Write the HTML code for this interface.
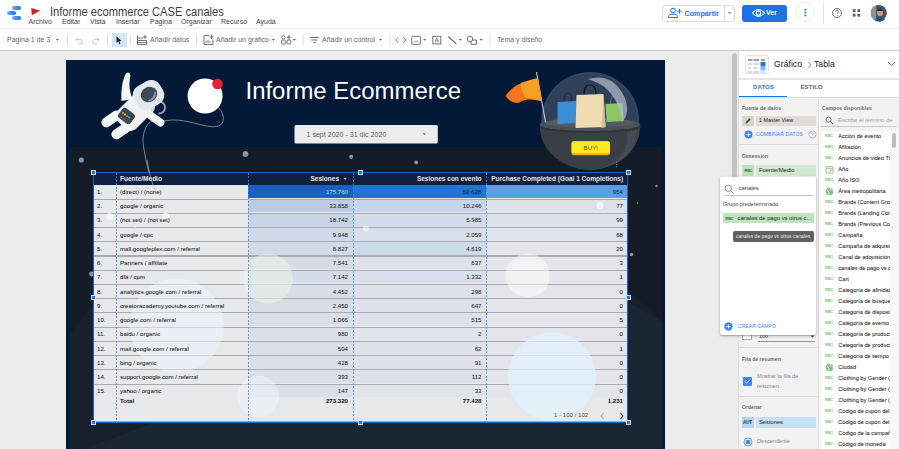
<!DOCTYPE html>
<html><head><meta charset="utf-8">
<style>
*{box-sizing:border-box;margin:0;padding:0}
html,body{width:899px;height:449px;overflow:hidden;background:#fff;font-family:"Liberation Sans",sans-serif;position:relative}
.a{position:absolute;white-space:nowrap}
#hdr{position:absolute;left:0;top:0;width:899px;height:28px;background:#fff}
#tb{position:absolute;left:0;top:28px;width:899px;height:22px;background:#fff;border-top:1px solid #f1f1f1}
#ws{position:absolute;left:0;top:50px;width:738px;height:399px;background:#ececec;border-top:1px solid #c8c8c8}
#cv{position:absolute;left:65.5px;top:60px;width:599.3px;height:389px;background:#021a38;overflow:hidden}
#panel{position:absolute;left:738px;top:50px;width:161px;height:399px;background:#fff;border-left:1px solid #dadce0;border-top:1px solid #c8c8c8}
.menu{font-size:7px;color:#3c4043;top:17.5px}
.tbt{font-size:7px;color:#5f6368;top:6.8px}
.div{position:absolute;width:1px;background:#e0e0e0}
#tbl{position:absolute;left:27.5px;top:112.5px;width:533.6px;height:250px;overflow:hidden}
.tr{position:absolute;z-index:0;left:0;width:533.6px;background:#e7e8ea;border-bottom:1.5px solid #a8aaad}
.hc{position:absolute;z-index:0}
.td{position:absolute;z-index:2;font-size:6.1px;color:#1a1a1a;-webkit-text-stroke:0.04px #1a1a1a;white-space:nowrap;line-height:7px}
.td.r{text-align:right}
.td.b{font-weight:700}
.th{position:absolute;z-index:2;top:2.5px;font-size:6.5px;font-weight:700;color:#e8eaed;white-space:nowrap;line-height:7px}
.dl{position:absolute;z-index:3;top:0;width:1px;height:250px;background:repeating-linear-gradient(180deg,#3d86f2 0 2px,transparent 2px 3.5px);opacity:0.8}
.hd{position:absolute;width:5px;height:5px;background:#1a73e8;border:1px solid #cfe0fb}
.sec{position:absolute;left:3px;font-size:5.1px;font-weight:700;color:#6a6d70;white-space:nowrap}
.fl{position:absolute;left:838.3px;margin-top:0.9px;font-size:5.6px;color:#1a1a1a;-webkit-text-stroke:0.05px #1a1a1a;white-space:nowrap;line-height:7px}
.abc{position:absolute;font-size:3.8px;font-weight:700;color:#7cc47c;white-space:nowrap;line-height:5px;letter-spacing:-0.1px}
</style></head><body>
<div id="hdr">
  <!-- logo -->
  <div class="a" style="left:12px;top:6.3px;width:9px;height:3.8px;border-radius:2px;background:linear-gradient(90deg,#7aaaf5,#1a6ef0)"></div>
  <div class="a" style="left:7px;top:11px;width:9px;height:4px;border-radius:2px;background:linear-gradient(90deg,#7aaaf5,#1a6ef0)"></div>
  <div class="a" style="left:12px;top:16px;width:9px;height:3.8px;border-radius:2px;background:linear-gradient(90deg,#7aaaf5,#1a6ef0)"></div>
  <svg class="a" style="left:30px;top:7px" width="12" height="10"><path d="M1.2 1 L10.2 3.8 L1.8 8.2 Z" fill="#d01f1f"/></svg>
  <div class="a" style="left:49.5px;top:5.2px;font-size:12.3px;color:#3c4043;transform:scaleX(0.905);transform-origin:0 0">Informe ecommerce CASE canales</div>
  <div class="a menu" style="left:28.5px">Archivo</div>
  <div class="a menu" style="left:62px">Editar</div>
  <div class="a menu" style="left:90px">Vista</div>
  <div class="a menu" style="left:116px">Insertar</div>
  <div class="a menu" style="left:150px">Página</div>
  <div class="a menu" style="left:181px">Organizar</div>
  <div class="a menu" style="left:221px">Recurso</div>
  <div class="a menu" style="left:256px">Ayuda</div>
  <!-- share -->
  <div class="a" style="left:662px;top:4.5px;width:72.5px;height:17.5px;border:1px solid #dadce0;border-radius:3px"></div>
  <div class="a" style="left:724px;top:5px;width:1px;height:16.5px;background:#dadce0"></div>
  <div class="a" style="left:684.5px;top:8.8px;font-size:7.2px;font-weight:700;color:#1a73e8">Compartir</div>
  <div class="a" style="left:742px;top:4.5px;width:45px;height:17.3px;background:#1a73e8;border-radius:3px"></div>
  <div class="a" style="left:766px;top:8.8px;font-size:7px;font-weight:700;color:#fff">Ver</div>
  <div class="a" style="left:795px;top:2px;width:20px;height:20px;border:1px solid #e8eaed;border-radius:50%"></div>
  <div class="a" style="left:823px;top:2px;width:1px;height:22px;background:#e0e0e0"></div>
  
</div>
<div id="tb">
  <div class="a tbt" style="left:7px">Página 1 de 3</div>
  <div class="a" style="left:111.6px;top:4px;width:15px;height:14px;background:#d2e3fc"></div>
  <div class="a tbt" style="left:150px">Añadir datos</div>
  <div class="a tbt" style="left:216px">Añadir un gráfico</div>
  <div class="a tbt" style="left:322px">Añadir un control</div>
  <div class="a tbt" style="left:497px">Tema y diseño</div>
</div>
<svg class="a" style="left:0;top:0;z-index:5" width="899" height="50" viewBox="0 0 899 50">
  <g fill="none" stroke="#5f6368" stroke-width="0.9">
    <!-- undo / redo -->
    <path d="M78 37.5 L76 39.5 L78 41.5 M76 39.5 H80.5 A2.3 2.3 0 0 1 80.5 44 H78" stroke="#bdc1c6"/>
    <path d="M97 37.5 L99 39.5 L97 41.5 M99 39.5 H94.5 A2.3 2.3 0 0 0 94.5 44 H97" stroke="#bdc1c6"/>
    <!-- add data -->
    <path d="M137.5 35.5 V44.5 H146.5 V40 M137.5 38 H143 M137.5 40.5 H146.5 M137.5 42.5 H146.5"/>
    <path d="M145 35 V39 M143 37 H147" stroke-width="0.9"/>
    <!-- add chart -->
    <path d="M209 35.5 H204 V44.5 H213 V39.5"/>
    <path d="M206 43 V41 M208 43 V39.5 M210 43 V41.5" />
    <path d="M211.5 35 V39 M209.5 37 H213.5"/>
    <!-- community -->
    <rect x="281.5" y="40" width="3.8" height="4" rx="1"/>
    <rect x="287" y="40" width="3.8" height="4" rx="1"/>
    <path d="M283.4 35.3 L285.4 37.3 L283.4 39.3 L281.4 37.3 Z"/>
    <path d="M289 35 V39.5 M286.8 37.2 H291.2"/>
    <!-- filter -->
    <path d="M310 37.5 H319 M311.5 40 H317.5 M313.3 42.5 H315.7"/>
    <!-- code -->
    <path d="M398 37.5 L395.8 40 L398 42.5 M403.5 37.5 L405.7 40 L403.5 42.5"/>
    <!-- image -->
    <rect x="411.8" y="36.3" width="8.8" height="8" rx="0.8"/>
    <path d="M414 42.3 L415.3 41 L416.3 42 L417.5 40.8 L418.5 42.3" stroke-width="0.7"/>
    <!-- text box -->
    <rect x="432.8" y="36.3" width="8" height="7.6"/>
    <path d="M434.8 42.5 L436.8 37.8 L438.8 42.5 M435.5 41 H438" stroke-width="0.7"/>
    <!-- line -->
    <path d="M448.3 36.5 L456.3 43.8" stroke-width="1.1"/>
    <!-- shapes -->
    <circle cx="470" cy="39" r="2.8"/>
    <path d="M472.5 40 H476.5 V44.3 H471 V41.8"/>
  </g>
  <g fill="#5f6368">
    <path d="M55.8 39 h3.2 l-1.6 1.8z"/>
    <path d="M271.8 39 h3.2 l-1.6 1.8z"/>
    <path d="M292.8 39 h3.2 l-1.6 1.8z"/>
    <path d="M379 39 h3.2 l-1.6 1.8z"/>
    <path d="M423 39 h3.2 l-1.6 1.8z"/>
    <path d="M458.8 39 h3.2 l-1.6 1.8z"/>
    <path d="M479.5 39 h3.2 l-1.6 1.8z"/>
  </g>
  <!-- select pointer -->
  <path d="M116.5 36.3 L116.5 43 L118.2 41.6 L119.5 44.2 L120.5 43.7 L119.3 41.2 L121.5 41 Z" fill="#202124"/>
  <!-- dividers -->
  <g stroke="#e0e0e0" stroke-width="1">
    <path d="M67.5 34 V46 M107.5 34 V46 M130.5 34 V46 M196.5 34 V46 M303 34 V46 M390 34 V46 M490 34 V46"/>
  </g>
  <!-- share icons -->
  <g fill="none" stroke="#1a73e8" stroke-width="1">
    <circle cx="673" cy="10.5" r="2.3"/>
    <path d="M668.5 17.5 V16.5 Q668.5 14.2 673 14.2 Q677.5 14.2 677.5 16.5 V17.5 Z"/>
    <path d="M679.5 9 V13.5 M677.3 11.2 H681.7"/>
  </g>
  <path d="M728 12.2 h3 l-1.5 1.7z" fill="#1a73e8"/>
  <g fill="none" stroke="#fff" stroke-width="1">
    <path d="M752.5 13 Q758.5 6 764.5 13 Q758.5 20 752.5 13 Z" stroke-width="1.1"/>
    <circle cx="758.5" cy="13" r="2.1" stroke-width="1.1"/>
  </g>
  <g fill="#1a73e8">
    <circle cx="805.4" cy="9.8" r="1"/><circle cx="805.4" cy="12.6" r="1"/><circle cx="805.4" cy="15.4" r="1"/>
  </g>
  <circle cx="837" cy="13" r="4.5" fill="none" stroke="#5f6368" stroke-width="0.9"/>
  <path d="M835.5 11.8 Q835.5 10 837 10 Q838.6 10 838.6 11.6 Q838.6 12.6 837.3 13.3 V14.2" fill="none" stroke="#5f6368" stroke-width="0.8"/>
  <circle cx="837.2" cy="15.6" r="0.5" fill="#5f6368"/>
  <g fill="#5f6368">
    <rect x="852.8" y="9.2" width="2.8" height="2.8"/><rect x="857.4" y="9.2" width="2.8" height="2.8"/>
    <rect x="852.8" y="13.8" width="2.8" height="2.8"/><rect x="857.4" y="13.8" width="2.8" height="2.8"/>
  </g>
  <!-- avatar -->
  <circle cx="878.8" cy="13" r="8" fill="#4a5461"/>
  <path d="M871 13 A8 8 0 0 1 876 5.5 L876 21 A8 8 0 0 1 871 13Z" fill="#8b949c"/>
  <ellipse cx="880" cy="12.5" rx="3" ry="3.6" fill="#c99a7a"/>
  <path d="M876.5 11 Q880 6 883.5 11" fill="#2a2a2a"/>
  <path d="M874.5 20 Q880 15 885 19.5 A8 8 0 0 1 874.5 20Z" fill="#2f4e73"/>
</svg>

<div id="ws"></div>
<div id="cv">
  <div class="a" style="left:4.5px;top:87px;width:592.2px;height:302px;background:#141c28"></div>
  <svg class="a" style="left:0;top:0" width="599.3" height="389" viewBox="65.5 60 599.3 389">
    <!-- diagonal subtle band bottom -->
    <path d="M69.5 333.5 L203 172.5 L500 172.5 L661.7 321.5 L661.7 449 L69.5 449 Z" fill="#17202b"/>
    <path d="M83.5 449 L220 397.5 L450 200 L661.7 321.5 L661.7 449 Z" fill="#1b2634"/>
    <!-- dots -->
    <circle cx="80.8" cy="160" r="2.6" fill="#8a929c"/>
    <circle cx="245" cy="154" r="2.9" fill="#8a929c"/>
    <circle cx="350.7" cy="156.8" r="2.1" fill="#8a929c"/>
    <circle cx="415.7" cy="162.3" r="1.9" fill="#8a929c"/>
    <circle cx="91" cy="274" r="2.4" fill="#8a929c"/>
    <circle cx="631" cy="254.5" r="1.8" fill="#8a929c"/>
    <circle cx="656" cy="186" r="1.2" fill="#8a929c"/>
    <circle cx="637" cy="203" r="0.8" fill="#8a929c"/>
    
    <!-- astronaut tether -->
    <path d="M160 121 C150 118 145 125 143 135 C141 145 146 160 152 190" stroke="#a9b0b8" stroke-width="0.7" fill="none"/>
    <path d="M163 121 C185 116 205 130 218 126 C227 122 222 110 216 106" stroke="#a9b0b8" stroke-width="0.7" fill="none"/>
    <!-- moon -->
    <circle cx="204.6" cy="96" r="17.5" fill="#fff"/>
    <circle cx="217" cy="84" r="5.3" fill="#e8202f"/>
    <!-- astronaut -->
    <g>
      <path d="M159 101.5 A6 6 0 1 1 158 113.5" stroke="#a3abb5" stroke-width="1.8" fill="none"/>
      <rect x="-13" y="-18" width="26" height="36" rx="6" fill="#d4d9df" transform="translate(135 111) rotate(45)"/>
      <rect x="-12" y="-16" width="24" height="33" rx="6" fill="#f0f2f4" transform="translate(133 113) rotate(45)"/>
      <path d="M121 101 Q120 86 124.5 75 Q126.5 71.5 129 73 Q130.5 74.5 129.5 78 Q127.5 88 132 99 Z" fill="#f4f5f6"/>
      <rect x="-5" y="-12" width="10" height="22" rx="5" fill="#f4f5f6" transform="translate(110 119.5) rotate(56)"/>
      <rect x="-5" y="-12" width="10" height="22" rx="5" fill="#f4f5f6" transform="translate(120 131.5) rotate(56)"/>
      <rect x="-4" y="-10" width="8" height="20" rx="4" fill="#f4f5f6" transform="translate(155 119) rotate(-55)"/>
      <rect x="-15" y="-13" width="30" height="26" rx="10" fill="#e4e7eb" transform="translate(148 95) rotate(-30)"/>
      <ellipse cx="148.5" cy="94.5" rx="8.5" ry="7.5" fill="#3d4a59" transform="rotate(-30 148.5 94.5)"/>
      <path d="M154.5 92 Q155 99 148 101" stroke="#8aa4b8" stroke-width="1.8" fill="none"/>
      <rect x="-7.5" y="-6" width="15" height="12" rx="3" fill="#3c4552" transform="translate(126 116) rotate(38)"/>
      <circle cx="122.5" cy="113" r="1" fill="#f59a23"/>
      <circle cx="124.5" cy="114.5" r="1" fill="#f5d423"/>
      <circle cx="126.5" cy="116" r="1" fill="#34c759"/>
      <circle cx="128.5" cy="117.5" r="1" fill="#30d0b0"/>
      <path d="M120.5 117 L126 121" stroke="#d23a3a" stroke-width="1"/>
    </g>
    <!-- title -->
    <text x="245" y="99.1" font-family="Liberation Sans" font-size="24.5" fill="#fff" textLength="215.5" lengthAdjust="spacingAndGlyphs">Informe Ecommerce</text>
    <!-- date picker -->
    <rect x="294" y="125.1" width="143.3" height="18.3" rx="1.5" fill="#ececec"/>
    <text x="306" y="137.1" font-family="Liberation Sans" font-size="7.1" fill="#616161">1 sept 2020 - 31 dic 2020</text>
    <path d="M422 133.2 h3.4 l-1.7 1.9 z" fill="#5f6368"/>
    <!-- globe -->
    <circle cx="589.7" cy="121" r="49" fill="#33465e"/>
    <circle cx="589.7" cy="121" r="46.5" fill="#2e4159"/>
    <path d="M539.2 125 C539.2 152 563 169.5 589.5 169.5 C616 169.5 639.8 152 639.8 125 Z" fill="#3a3f46"/>
    <path d="M626 132 C630 150 615 166 595 169 C622 166 636 150 637 130 Z" fill="#454b53"/>
    <ellipse cx="589.5" cy="126.5" rx="50.3" ry="6.5" fill="#30343a"/>
    <ellipse cx="589.5" cy="124.5" rx="50.3" ry="6.5" fill="#4b5058"/>
    <ellipse cx="589.5" cy="122.8" rx="45" ry="4.6" fill="#555a62"/>
    <path d="M616 161.5 v0.8 M616 164 v0.8 M616 166.5 v0.8" stroke="#8a929c" stroke-width="0.9"/>
    <!-- bags -->
    <path d="M563.5 102 Q563.5 93 567.5 93 Q571.5 93 571.5 102" stroke="#222" stroke-width="0.9" fill="none"/>
    <path d="M557 102 L576 101 L575 123 L557 124 Z" fill="#3a8fd6"/>
    <path d="M610 104 Q610 96.5 613.5 96.5 Q617 96.5 617 104" stroke="#777e80" stroke-width="0.8" fill="none"/>
    <path d="M605 104 L622 103 L623 121 L606 122 Z" fill="#8cc763"/>
    <path d="M583.5 95.5 Q583 85 589.5 85 Q596 85 595.5 95.5" stroke="#111" stroke-width="1.1" fill="none"/>
    <path d="M576 95 L603 94 L605 127 L575 128 Z" fill="#efdcb0"/>
    <path d="M603 94 L605 127 L601 128 Z" fill="#d4c298"/>
    <!-- highlight -->
    <path d="M587.5 79 Q612 72 624 97 Q630 112 622 122 Q619 100 604 87 Q597 82 587.5 79 Z" fill="#b4bcc7" opacity="0.72"/>
    <!-- BUY button -->
    <rect x="571" y="141.3" width="38.5" height="14" rx="2.5" fill="#f29f05"/>
    <rect x="571" y="141.3" width="38.5" height="12.3" rx="2.5" fill="#ffea1f"/>
    <text x="590.3" y="150.3" text-anchor="middle" font-family="Liberation Sans" font-size="6.2" fill="#5c5410">BUY!</text>
    <!-- flag -->
    <path d="M536 72 L545 122" stroke="#d8dde2" stroke-width="1"/>
    <path d="M505 96 Q515 82 528 82 L537.5 78 L541 101 Q525 97 518 103 Q510 103 505 96 Z" fill="#f4761a"/>
    <path d="M520 83 Q528 80 537.5 78 L541 101 Q530 98 526 98 Q520 92 520 83 Z" fill="#f7a024"/>
    </svg>
  <!-- table -->
  <div id="tbl">
    <div class="a" style="left:0;top:12px;width:533.6px;height:238px;background:#a9abae"></div>
    <div class="a" style="left:0;top:0;width:533.6px;height:12.8px;background:#0f2140"></div>
    <div class="th" style="left:27px">Fuente/Medio</div>
    <div class="th" style="right:287.6px">Sesiones</div>
    <svg class="a" style="left:249.5px;top:4px" width="5" height="4"><path d="M0.5 1 h3.2 l-1.6 1.8z" fill="#fff"/></svg>
    <div class="th" style="right:145px">Sesiones con evento</div>
    <div class="th" style="right:3.5px">Purchase Completed (Goal 1 Completions)</div>
<div class="tr" style="top:12.80px;height:14.24px"></div>
<div class="hc" style="left:155px;top:12.80px;width:104.5px;height:12.74px;background:#1b5fbf"></div>
<div class="hc" style="left:259.5px;top:12.80px;width:133.5px;height:12.74px;background:#1f74d8"></div>
<div class="hc" style="left:393px;top:12.80px;width:140.60000000000002px;height:12.74px;background:#5a9fe6"></div>
<div class="td" style="left:4px;top:15.50px">1.</div>
<div class="td" style="left:27px;top:15.50px">(direct) / (none)</div>
<div class="td r" style="right:278.6px;top:15.50px;color:#cfe0f7">175.760</div>
<div class="td r" style="right:145.10000000000002px;top:15.50px">50.628</div>
<div class="td r" style="right:3.6000000000000227px;top:15.50px">954</div>
<div class="tr" style="top:27.04px;height:14.24px"></div>
<div class="hc" style="left:155px;top:27.04px;width:104.5px;height:12.74px;background:#bccde3"></div>
<div class="hc" style="left:259.5px;top:27.04px;width:133.5px;height:12.74px;background:#c4d5eb"></div>
<div class="hc" style="left:393px;top:27.04px;width:140.60000000000002px;height:12.74px;background:#dde2ea"></div>
<div class="td" style="left:4px;top:29.74px">2.</div>
<div class="td" style="left:27px;top:29.74px">google / organic</div>
<div class="td r" style="right:278.6px;top:29.74px;color:#222">33.858</div>
<div class="td r" style="right:145.10000000000002px;top:29.74px">10.246</div>
<div class="td r" style="right:3.6000000000000227px;top:29.74px">77</div>
<div class="tr" style="top:41.28px;height:14.24px"></div>
<div class="hc" style="left:155px;top:41.28px;width:104.5px;height:12.74px;background:#c8d4e5"></div>
<div class="hc" style="left:259.5px;top:41.28px;width:133.5px;height:12.74px;background:#d3dcea"></div>
<div class="hc" style="left:393px;top:41.28px;width:140.60000000000002px;height:12.74px;background:#dbe1ea"></div>
<div class="td" style="left:4px;top:43.98px">3.</div>
<div class="td" style="left:27px;top:43.98px">(not set) / (not set)</div>
<div class="td r" style="right:278.6px;top:43.98px;color:#222">18.742</div>
<div class="td r" style="right:145.10000000000002px;top:43.98px">5.985</div>
<div class="td r" style="right:3.6000000000000227px;top:43.98px">99</div>
<div class="tr" style="top:55.52px;height:14.24px"></div>
<div class="hc" style="left:155px;top:55.52px;width:104.5px;height:12.74px;background:#d0d9e7"></div>
<div class="hc" style="left:259.5px;top:55.52px;width:133.5px;height:12.74px;background:#d9dfea"></div>
<div class="hc" style="left:393px;top:55.52px;width:140.60000000000002px;height:12.74px;background:#dfe3ea"></div>
<div class="td" style="left:4px;top:58.22px">4.</div>
<div class="td" style="left:27px;top:58.22px">google / cpc</div>
<div class="td r" style="right:278.6px;top:58.22px;color:#222">9.948</div>
<div class="td r" style="right:145.10000000000002px;top:58.22px">2.059</div>
<div class="td r" style="right:3.6000000000000227px;top:58.22px">68</div>
<div class="tr" style="top:69.76px;height:14.24px"></div>
<div class="hc" style="left:155px;top:69.76px;width:104.5px;height:12.74px;background:#d1dae7"></div>
<div class="hc" style="left:259.5px;top:69.76px;width:133.5px;height:12.74px;background:#cddaea"></div>
<div class="hc" style="left:393px;top:69.76px;width:140.60000000000002px;height:12.74px;background:#e3e5ea"></div>
<div class="td" style="left:4px;top:72.46px">5.</div>
<div class="td" style="left:27px;top:72.46px">mall.googleplex.com / referral</div>
<div class="td r" style="right:278.6px;top:72.46px;color:#222">8.827</div>
<div class="td r" style="right:145.10000000000002px;top:72.46px">4.619</div>
<div class="td r" style="right:3.6000000000000227px;top:72.46px">20</div>
<div class="tr" style="top:84.00px;height:14.24px"></div>
<div class="hc" style="left:155px;top:84.00px;width:104.5px;height:12.74px;background:#d5dce8"></div>
<div class="hc" style="left:259.5px;top:84.00px;width:133.5px;height:12.74px;background:#dce1ea"></div>
<div class="hc" style="left:393px;top:84.00px;width:140.60000000000002px;height:12.74px;background:#e4e5ea"></div>
<div class="td" style="left:4px;top:86.70px">6.</div>
<div class="td" style="left:27px;top:86.70px">Partners / affiliate</div>
<div class="td r" style="right:278.6px;top:86.70px;color:#222">7.541</div>
<div class="td r" style="right:145.10000000000002px;top:86.70px">637</div>
<div class="td r" style="right:3.6000000000000227px;top:86.70px">3</div>
<div class="tr" style="top:98.24px;height:14.24px"></div>
<div class="hc" style="left:155px;top:98.24px;width:104.5px;height:12.74px;background:#d5dce8"></div>
<div class="hc" style="left:259.5px;top:98.24px;width:133.5px;height:12.74px;background:#d8dfea"></div>
<div class="hc" style="left:393px;top:98.24px;width:140.60000000000002px;height:12.74px;background:#e4e5ea"></div>
<div class="td" style="left:4px;top:100.94px">7.</div>
<div class="td" style="left:27px;top:100.94px">dfa / cpm</div>
<div class="td r" style="right:278.6px;top:100.94px;color:#222">7.142</div>
<div class="td r" style="right:145.10000000000002px;top:100.94px">1.332</div>
<div class="td r" style="right:3.6000000000000227px;top:100.94px">1</div>
<div class="tr" style="top:112.48px;height:14.24px"></div>
<div class="hc" style="left:155px;top:112.48px;width:104.5px;height:12.74px;background:#d7dee8"></div>
<div class="hc" style="left:259.5px;top:112.48px;width:133.5px;height:12.74px;background:#dde2ea"></div>
<div class="hc" style="left:393px;top:112.48px;width:140.60000000000002px;height:12.74px;background:#e4e5ea"></div>
<div class="td" style="left:4px;top:115.18px">8.</div>
<div class="td" style="left:27px;top:115.18px">analytics.google.com / referral</div>
<div class="td r" style="right:278.6px;top:115.18px;color:#222">4.452</div>
<div class="td r" style="right:145.10000000000002px;top:115.18px">298</div>
<div class="td r" style="right:3.6000000000000227px;top:115.18px">0</div>
<div class="tr" style="top:126.72px;height:14.24px"></div>
<div class="hc" style="left:155px;top:126.72px;width:104.5px;height:12.74px;background:#d8dee8"></div>
<div class="hc" style="left:259.5px;top:126.72px;width:133.5px;height:12.74px;background:#dce1ea"></div>
<div class="hc" style="left:393px;top:126.72px;width:140.60000000000002px;height:12.74px;background:#e4e5ea"></div>
<div class="td" style="left:4px;top:129.42px">9.</div>
<div class="td" style="left:27px;top:129.42px">creatoracademy.youtube.com / referral</div>
<div class="td r" style="right:278.6px;top:129.42px;color:#222">2.450</div>
<div class="td r" style="right:145.10000000000002px;top:129.42px">647</div>
<div class="td r" style="right:3.6000000000000227px;top:129.42px">0</div>
<div class="tr" style="top:140.96px;height:14.24px"></div>
<div class="hc" style="left:155px;top:140.96px;width:104.5px;height:12.74px;background:#d9dfe8"></div>
<div class="hc" style="left:259.5px;top:140.96px;width:133.5px;height:12.74px;background:#dce1ea"></div>
<div class="hc" style="left:393px;top:140.96px;width:140.60000000000002px;height:12.74px;background:#e3e5ea"></div>
<div class="td" style="left:4px;top:143.66px">10.</div>
<div class="td" style="left:27px;top:143.66px">google.com / referral</div>
<div class="td r" style="right:278.6px;top:143.66px;color:#222">1.066</div>
<div class="td r" style="right:145.10000000000002px;top:143.66px">515</div>
<div class="td r" style="right:3.6000000000000227px;top:143.66px">5</div>
<div class="tr" style="top:155.20px;height:14.24px"></div>
<div class="hc" style="left:155px;top:155.20px;width:104.5px;height:12.74px;background:#dadfe8"></div>
<div class="hc" style="left:259.5px;top:155.20px;width:133.5px;height:12.74px;background:#dfe3ea"></div>
<div class="hc" style="left:393px;top:155.20px;width:140.60000000000002px;height:12.74px;background:#e4e5ea"></div>
<div class="td" style="left:4px;top:157.90px">11.</div>
<div class="td" style="left:27px;top:157.90px">baidu / organic</div>
<div class="td r" style="right:278.6px;top:157.90px;color:#222">980</div>
<div class="td r" style="right:145.10000000000002px;top:157.90px">2</div>
<div class="td r" style="right:3.6000000000000227px;top:157.90px">0</div>
<div class="tr" style="top:169.44px;height:14.24px"></div>
<div class="hc" style="left:155px;top:169.44px;width:104.5px;height:12.74px;background:#dadfe8"></div>
<div class="hc" style="left:259.5px;top:169.44px;width:133.5px;height:12.74px;background:#dee2ea"></div>
<div class="hc" style="left:393px;top:169.44px;width:140.60000000000002px;height:12.74px;background:#e4e5ea"></div>
<div class="td" style="left:4px;top:172.14px">12.</div>
<div class="td" style="left:27px;top:172.14px">mail.google.com / referral</div>
<div class="td r" style="right:278.6px;top:172.14px;color:#222">504</div>
<div class="td r" style="right:145.10000000000002px;top:172.14px">62</div>
<div class="td r" style="right:3.6000000000000227px;top:172.14px">1</div>
<div class="tr" style="top:183.68px;height:14.24px"></div>
<div class="hc" style="left:155px;top:183.68px;width:104.5px;height:12.74px;background:#dadfe8"></div>
<div class="hc" style="left:259.5px;top:183.68px;width:133.5px;height:12.74px;background:#dee2ea"></div>
<div class="hc" style="left:393px;top:183.68px;width:140.60000000000002px;height:12.74px;background:#e4e5ea"></div>
<div class="td" style="left:4px;top:186.38px">13.</div>
<div class="td" style="left:27px;top:186.38px">bing / organic</div>
<div class="td r" style="right:278.6px;top:186.38px;color:#222">428</div>
<div class="td r" style="right:145.10000000000002px;top:186.38px">91</div>
<div class="td r" style="right:3.6000000000000227px;top:186.38px">0</div>
<div class="tr" style="top:197.92px;height:14.24px"></div>
<div class="hc" style="left:155px;top:197.92px;width:104.5px;height:12.74px;background:#dbe0e8"></div>
<div class="hc" style="left:259.5px;top:197.92px;width:133.5px;height:12.74px;background:#dde2ea"></div>
<div class="hc" style="left:393px;top:197.92px;width:140.60000000000002px;height:12.74px;background:#e4e5ea"></div>
<div class="td" style="left:4px;top:200.62px">14.</div>
<div class="td" style="left:27px;top:200.62px">support.google.com / referral</div>
<div class="td r" style="right:278.6px;top:200.62px;color:#222">393</div>
<div class="td r" style="right:145.10000000000002px;top:200.62px">112</div>
<div class="td r" style="right:3.6000000000000227px;top:200.62px">0</div>
<div class="tr" style="top:212.16px;height:37.84px"></div>
<div class="hc" style="left:155px;top:212.16px;width:104.5px;height:12.74px;background:#dbe0e8"></div>
<div class="hc" style="left:259.5px;top:212.16px;width:133.5px;height:12.74px;background:#dfe3ea"></div>
<div class="hc" style="left:393px;top:212.16px;width:140.60000000000002px;height:12.74px;background:#e4e5ea"></div>
<div class="td" style="left:4px;top:214.86px">15.</div>
<div class="td" style="left:27px;top:214.86px">yahoo / organic</div>
<div class="td r" style="right:278.6px;top:214.86px;color:#222">147</div>
<div class="td r" style="right:145.10000000000002px;top:214.86px">33</div>
<div class="td r" style="right:3.6000000000000227px;top:214.86px">0</div>
    <div class="td b" style="left:27px;top:224.3px">Total</div>
    <div class="td b r" style="right:278.6px;top:224.3px">273.320</div>
    <div class="td b r" style="right:145.1px;top:224.3px">77.428</div>
    <div class="td b r" style="right:3.6px;top:224.3px">1.231</div>
    <div class="td" style="left:461px;top:238.5px;color:#5f6368">1 - 100 / 102</div>
    <svg class="a" style="left:505px;top:238px" width="30" height="10"><path d="M5.5 2 L3 5 L5.5 8" stroke="#9aa0a6" stroke-width="0.9" fill="none"/><path d="M22.5 2 L25 5 L22.5 8" stroke="#202124" stroke-width="1.1" fill="none"/></svg>
    <svg class="a" style="left:0;top:0;z-index:1" width="533.6" height="250" viewBox="93 172.5 533.6 250">
      <g>
      <circle cx="176.6" cy="325" r="47" fill="#f0f6ff" opacity="0.5"/>
      <circle cx="268" cy="278" r="25" fill="#eef6e8" opacity="0.5"/>
      <circle cx="258" cy="396" r="21" fill="#f0f6ff" opacity="0.45"/>
      <circle cx="527.7" cy="275" r="22" fill="#fff" opacity="0.45"/>
      <circle cx="552" cy="376" r="44" fill="#e3f3fd" opacity="0.7"/>
      <circle cx="109.5" cy="216" r="3.5" fill="#fff" opacity="0.6"/>
      <circle cx="165.8" cy="215.6" r="3.5" fill="#fff" opacity="0.6"/>
      <circle cx="135" cy="226" r="1.2" fill="#fff" opacity="0.6"/>
      <circle cx="365.7" cy="228" r="3" fill="#fff" opacity="0.5"/>
      <circle cx="600" cy="205" r="3.5" fill="#fff" opacity="0.6"/>
      </g>
    </svg>
    <!-- dashed column lines -->
    <div class="dl" style="left:23.4px"></div>
    <div class="dl" style="left:155px"></div>
    <div class="dl" style="left:259.5px"></div>
    <div class="dl" style="left:393px"></div>
  </div>
  <div class="a" style="left:27px;top:112px;width:535.1px;height:251px;border:1px solid #1d5fc4"></div>
  <svg class="a" style="left:0;top:0" width="600" height="389" viewBox="65.5 60 599.3 389"><path d="M146.3 160 Q148 172 150.5 180 Q152.5 186 154.5 190" stroke="#b5bcc4" stroke-width="0.7" fill="none" opacity="0.9"/></svg>
  <div class="hd" style="left:25.3px;top:110.3px"></div>
  <div class="hd" style="left:292.8px;top:110.3px"></div>
  <div class="hd" style="left:560.8px;top:110.3px"></div>
  <div class="hd" style="left:25.3px;top:235px"></div>
  <div class="hd" style="left:560.8px;top:235px"></div>
  <div class="hd" style="left:25.3px;top:360px"></div>
  <div class="hd" style="left:292.8px;top:360px"></div>
  <div class="hd" style="left:560.8px;top:360px"></div>
</div>

<div id="panel">
</div>
<div class="a" style="left:732px;top:53px;width:4.5px;height:250px;border-radius:2.5px;background:#c2c2c2"></div>
<div class="a" style="left:739px;top:51px;width:160px;height:398px;background:#fff;overflow:hidden">
  <div class="a" style="left:5.5px;top:3.5px;width:24px;height:19.7px;border:1px solid #e3e3e3;border-radius:2px;background:#fff"></div>
  <svg class="a" style="left:5.5px;top:3.5px" width="24" height="20">
    <g stroke-width="1.1">
      <path d="M3 5 H7.5 M8.5 5 H14 M16 5 H20" stroke="#3c4043"/>
      <path d="M3 9 H7.5 M8.5 9 H14 M3 13 H6 M8.5 13 H12 M3 17 H7.5 M8.5 17 H14" stroke="#9aa0a6" stroke-width="0.8"/>
    </g>
    <rect x="15.5" y="7" width="5" height="4" fill="#1a73e8"/>
    <rect x="15.5" y="11" width="5" height="4" fill="#8ab4f8"/>
    <rect x="15.5" y="15" width="5" height="4" fill="#d2e3fc"/>
  </svg>
  <div class="a" style="left:35px;top:8.3px;font-size:8.7px;color:#202124">Gráfico</div>
  <svg class="a" style="left:67.5px;top:9.5px" width="6" height="8"><path d="M1.5 1 L4 4 L1.5 7" stroke="#80868b" stroke-width="0.9" fill="none"/></svg>
  <div class="a" style="left:75px;top:8.3px;font-size:8.7px;color:#202124">Tabla</div>
  <svg class="a" style="left:148px;top:10px" width="10" height="6"><path d="M1 1 L4.5 4.5 L8 1" stroke="#5f6368" stroke-width="0.9" fill="none"/></svg>
  <div class="a" style="left:0;top:27px;width:160px;height:1.5px;background:#e6e6e6"></div>
  <div class="a" style="left:14px;top:33px;font-size:6px;font-weight:700;color:#1a73e8;letter-spacing:0.1px">DATOS</div>
  <div class="a" style="left:61.5px;top:33px;font-size:6px;font-weight:700;color:#5f6368;letter-spacing:0.1px">ESTILO</div>
  <div class="a" style="left:0;top:44.5px;width:48px;height:1.3px;background:#1a73e8"></div>
  <div class="a" style="left:0;top:45.5px;width:160px;height:1px;background:#dcdcdc"></div>
  <!-- left column -->
  <div class="a" style="left:0;top:46.5px;width:79.5px;height:352px;background:#f2f2f2;border-right:1px solid #dadada"></div>
  <div class="sec" style="top:54px">Fuente de datos</div>
  <div class="a" style="left:3px;top:64.5px;width:12px;height:10.7px;background:#d8d3cf"></div>
  <svg class="a" style="left:5px;top:66px" width="8" height="8"><path d="M1.5 6.5 L1.8 5 L5.5 1.3 L6.7 2.5 L3 6.2 Z" fill="#3c4043"/></svg>
  <div class="a" style="left:17px;top:64.5px;width:59.5px;height:10.7px;background:#e0dbd7"></div>
  <div class="a" style="left:20px;top:66.3px;font-size:5.4px;color:#202124">1 Master View</div>
  <svg class="a" style="left:4.5px;top:78.5px" width="9" height="9"><circle cx="4.5" cy="4.5" r="4" fill="#4285f4"/><path d="M4.5 2.5 V6.5 M2.5 4.5 H6.5" stroke="#fff" stroke-width="1"/></svg>
  <div class="a" style="left:17px;top:79.5px;font-size:5.2px;color:#4285f4">COMBINAR DATOS</div>
  <svg class="a" style="left:68.5px;top:78.5px" width="9" height="9"><circle cx="4.5" cy="4.5" r="3.5" fill="none" stroke="#9aa0a6" stroke-width="0.7"/><path d="M3.5 3.7 Q3.5 2.7 4.5 2.7 Q5.5 2.7 5.5 3.6 Q5.5 4.3 4.6 4.8 V5.4" stroke="#9aa0a6" stroke-width="0.6" fill="none"/><circle cx="4.6" cy="6.3" r="0.35" fill="#9aa0a6"/></svg>
  <div class="a" style="left:0;top:93px;width:79.5px;height:1px;background:#dadada"></div>
  <div class="sec" style="top:102px">Dimensión</div>
  <div class="a" style="left:3px;top:114px;width:12px;height:11px;background:#bfe0bf"></div>
  <div class="abc" style="left:5.5px;top:117.5px;color:#2e6b2e">RBC</div>
  <div class="a" style="left:17px;top:114px;width:59.5px;height:11px;background:#cfe8cf"></div>
  <div class="a" style="left:20px;top:116px;font-size:5.8px;color:#202124">Fuente/Medio</div>
  <!-- behind popup lower part -->
  <div class="a" style="left:3px;top:280px;width:10px;height:9px;border:0.7px solid #aaa;background:#fff"></div>
  <div class="a" style="left:20px;top:281.5px;font-size:5.5px;color:#444">100</div>
  <div class="a" style="left:19px;top:290px;width:57px;height:0.7px;background:#999"></div>
  <svg class="a" style="left:71px;top:284px" width="6" height="4"><path d="M0.5 0.5 h4 l-2 2.2z" fill="#555"/></svg>
  <div class="a" style="left:0;top:295.8px;width:79.5px;height:1px;background:#dadada"></div>
  <div class="sec" style="top:304.5px">Fila de resumen</div>
  <div class="a" style="left:4px;top:326px;width:8.5px;height:8.5px;background:#4285f4;border-radius:1px"></div>
  <svg class="a" style="left:4px;top:326px" width="9" height="9"><path d="M2 4.5 L3.7 6.2 L7 2.8" stroke="#fff" stroke-width="0.9" fill="none"/></svg>
  <div class="a" style="left:18px;top:321.5px;font-size:5.6px;color:#80868b">Mostrar la fila de</div>
  <div class="a" style="left:18px;top:331.5px;font-size:5.6px;color:#80868b">resumen</div>
  <div class="a" style="left:0;top:344.5px;width:79.5px;height:1px;background:#dadada"></div>
  <div class="sec" style="top:353px">Ordenar</div>
  <div class="a" style="left:3px;top:365.8px;width:12px;height:11.5px;background:#b3d4f3"></div>
  <div class="a" style="left:4px;top:368.5px;font-size:4.6px;font-weight:700;color:#1f3f6b;letter-spacing:-0.15px">AUT</div>
  <div class="a" style="left:17px;top:365.8px;width:59.5px;height:11.5px;background:#c6e0f8"></div>
  <div class="a" style="left:20px;top:367.8px;font-size:5.8px;color:#202124">Sesiones</div>
  <svg class="a" style="left:3.5px;top:385.5px" width="10" height="10"><circle cx="5" cy="5" r="4" fill="none" stroke="#4285f4" stroke-width="0.8"/><circle cx="5" cy="5" r="2.3" fill="#4285f4"/></svg>
  <div class="a" style="left:18px;top:387px;font-size:5.6px;color:#80868b">Descendente</div>
  <!-- right column -->
  <div class="a" style="left:80.5px;top:46.5px;width:80px;height:352px;background:#f2f2f2"></div>
  <div class="sec" style="left:83px;top:54px">Campos disponibles</div>
  <svg class="a" style="left:86px;top:65px" width="9" height="9"><circle cx="3.6" cy="3.6" r="2.5" fill="none" stroke="#5f6368" stroke-width="0.9"/><path d="M5.5 5.5 L8 8" stroke="#5f6368" stroke-width="1"/></svg>
  <div class="a" style="left:99px;top:66px;font-size:5.8px;color:#9aa0a6">Escriba el término de</div>
  <div class="a" style="left:82px;top:75px;width:76px;height:0.8px;background:#c8c8c8"></div>
  <div class="a" style="left:82px;top:79.5px;width:69px;height:320px;background:#fff"></div>
  <div class="a" style="left:151px;top:79.5px;width:9px;height:320px;background:#f7f7f7"></div>
  <div class="a" style="left:153px;top:82px;width:4px;height:15px;border-radius:2px;background:#bdbdbd"></div>
</div>
<div class="a" style="left:0;top:0;width:899px;height:449px;overflow:hidden;pointer-events:none">
  <div class="a" style="left:821px;top:0;width:69px;height:449px;overflow:hidden">
  <div class="a" style="left:-821px;top:0;width:899px;height:449px">
<div class="abc" style="left:825px;top:134.4px">RBC</div>
<div class="fl" style="top:132.4px">Acción de evento</div>
<div class="abc" style="left:825px;top:145.4px">RBC</div>
<div class="fl" style="top:143.4px">Afiliación</div>
<div class="abc" style="left:825px;top:156.4px">RBC</div>
<div class="fl" style="top:154.4px">Anuncios de video Tr</div>
<svg class="a" style="left:825px;top:164.5px" width="9" height="9"><rect x="1" y="1.5" width="7" height="6.5" rx="0.8" fill="none" stroke="#7cc47c" stroke-width="0.9"/><path d="M1 3.3 H8" stroke="#7cc47c" stroke-width="0.9"/><rect x="4.8" y="5" width="1.6" height="1.6" fill="#7cc47c"/></svg>
<div class="fl" style="top:165.4px">Año</div>
<div class="abc" style="left:825px;top:178.4px">RBC</div>
<div class="fl" style="top:176.4px">Año ISO</div>
<svg class="a" style="left:825px;top:186.5px" width="9" height="9"><circle cx="4.5" cy="4.5" r="3.8" fill="#7cc47c"/><path d="M2 3 Q3.5 3.5 3.5 5 Q4.5 6 3.8 8 M5.5 1.2 Q5 2.5 6.5 3 Q8 3.2 8.2 4.5" stroke="#fff" stroke-width="0.8" fill="none"/></svg>
<div class="fl" style="top:187.4px">Área metropolitana</div>
<div class="abc" style="left:825px;top:200.4px">RBC</div>
<div class="fl" style="top:198.4px">Brands (Content Grou</div>
<div class="abc" style="left:825px;top:211.4px">RBC</div>
<div class="fl" style="top:209.4px">Brands (Landing Con</div>
<div class="abc" style="left:825px;top:222.4px">RBC</div>
<div class="fl" style="top:220.4px">Brands (Previous Con</div>
<div class="abc" style="left:825px;top:233.4px">RBC</div>
<div class="fl" style="top:231.4px">Campaña</div>
<div class="abc" style="left:825px;top:244.4px">RBC</div>
<div class="fl" style="top:242.4px">Campaña de adquisici</div>
<div class="abc" style="left:825px;top:255.4px">RBC</div>
<div class="fl" style="top:253.4px">Canal de adquisición</div>
<div class="abc" style="left:825px;top:266.4px">RBC</div>
<div class="fl" style="top:264.4px">canales de pago vs o</div>
<div class="abc" style="left:825px;top:277.4px">RBC</div>
<div class="fl" style="top:275.4px">Cart</div>
<div class="abc" style="left:825px;top:288.4px">RBC</div>
<div class="fl" style="top:286.4px">Categoría de afinidad</div>
<div class="abc" style="left:825px;top:299.4px">RBC</div>
<div class="fl" style="top:297.4px">Categoría de búsqued</div>
<div class="abc" style="left:825px;top:310.4px">RBC</div>
<div class="fl" style="top:308.4px">Categoría de disposit</div>
<div class="abc" style="left:825px;top:321.4px">RBC</div>
<div class="fl" style="top:319.4px">Categoría de evento</div>
<div class="abc" style="left:825px;top:332.4px">RBC</div>
<div class="fl" style="top:330.4px">Categoría de product</div>
<div class="abc" style="left:825px;top:343.4px">RBC</div>
<div class="fl" style="top:341.4px">Categoría de product</div>
<div class="abc" style="left:825px;top:354.4px">RBC</div>
<div class="fl" style="top:352.4px">Categoría de tiempo</div>
<svg class="a" style="left:825px;top:362.5px" width="9" height="9"><circle cx="4.5" cy="4.5" r="3.8" fill="#7cc47c"/><path d="M2 3 Q3.5 3.5 3.5 5 Q4.5 6 3.8 8 M5.5 1.2 Q5 2.5 6.5 3 Q8 3.2 8.2 4.5" stroke="#fff" stroke-width="0.8" fill="none"/></svg>
<div class="fl" style="top:363.4px">Ciudad</div>
<div class="abc" style="left:825px;top:376.4px">RBC</div>
<div class="fl" style="top:374.4px">Clothing by Gender (C</div>
<div class="abc" style="left:825px;top:387.4px">RBC</div>
<div class="fl" style="top:385.4px">Clothing by Gender (L</div>
<div class="abc" style="left:825px;top:398.4px">RBC</div>
<div class="fl" style="top:396.4px">Clothing by Gender (F</div>
<div class="abc" style="left:825px;top:409.4px">RBC</div>
<div class="fl" style="top:407.4px">Código de cupón del</div>
<div class="abc" style="left:825px;top:420.4px">RBC</div>
<div class="fl" style="top:418.4px">Código de cupón del</div>
<div class="abc" style="left:825px;top:431.4px">RBC</div>
<div class="fl" style="top:429.4px">Código de la campañ</div>
<div class="abc" style="left:825px;top:442.4px">RBC</div>
<div class="fl" style="top:440.4px">Código de moneda</div>
  </div></div>
</div>
<!-- popup -->
<div class="a" style="left:720px;top:177px;width:96px;height:157.5px;background:#fff;border-radius:2px;box-shadow:0 1px 3px rgba(0,0,0,0.3),0 1px 1px rgba(0,0,0,0.1)">
  <svg class="a" style="left:4px;top:7px" width="11" height="11"><circle cx="4.3" cy="4.3" r="3.2" fill="none" stroke="#80868b" stroke-width="0.9"/><path d="M6.6 6.6 L9.6 9.6" stroke="#80868b" stroke-width="1"/></svg>
  <div class="a" style="left:18.5px;top:8px;font-size:5.9px;color:#3c4043">canales</div>
  <div class="a" style="left:3.5px;top:17.5px;width:89.5px;height:1px;background:#c4c4c4"></div>
  <div class="a" style="left:3px;top:23.5px;font-size:5.5px;color:#3c4043">Grupo predeterminado</div>
  <div class="a" style="left:3px;top:36px;width:90.5px;height:10px;background:#bfe2bf;border-radius:1px"></div>
  <div class="abc" style="left:5.5px;top:39.5px;color:#2e6b2e">RBC</div>
  <div class="a" style="left:17.5px;top:37.5px;font-size:5.8px;color:#202124">canales de pago vs otros c...</div>
  <div class="a" style="left:13px;top:53.5px;width:81px;height:11px;background:#616161;border-radius:2px"></div>
  <div class="a" style="left:16px;top:56px;font-size:5px;color:#e8e8e8">canales de pago vs otros canales</div>
  <svg class="a" style="left:4px;top:144.5px" width="9" height="9"><circle cx="4.5" cy="4.5" r="4.2" fill="#4285f4"/><path d="M4.5 2.5 V6.5 M2.5 4.5 H6.5" stroke="#fff" stroke-width="1"/></svg>
  <div class="a" style="left:18px;top:145.5px;font-size:5.1px;color:#4285f4">CREAR CAMPO</div>
</div>

</body></html>
